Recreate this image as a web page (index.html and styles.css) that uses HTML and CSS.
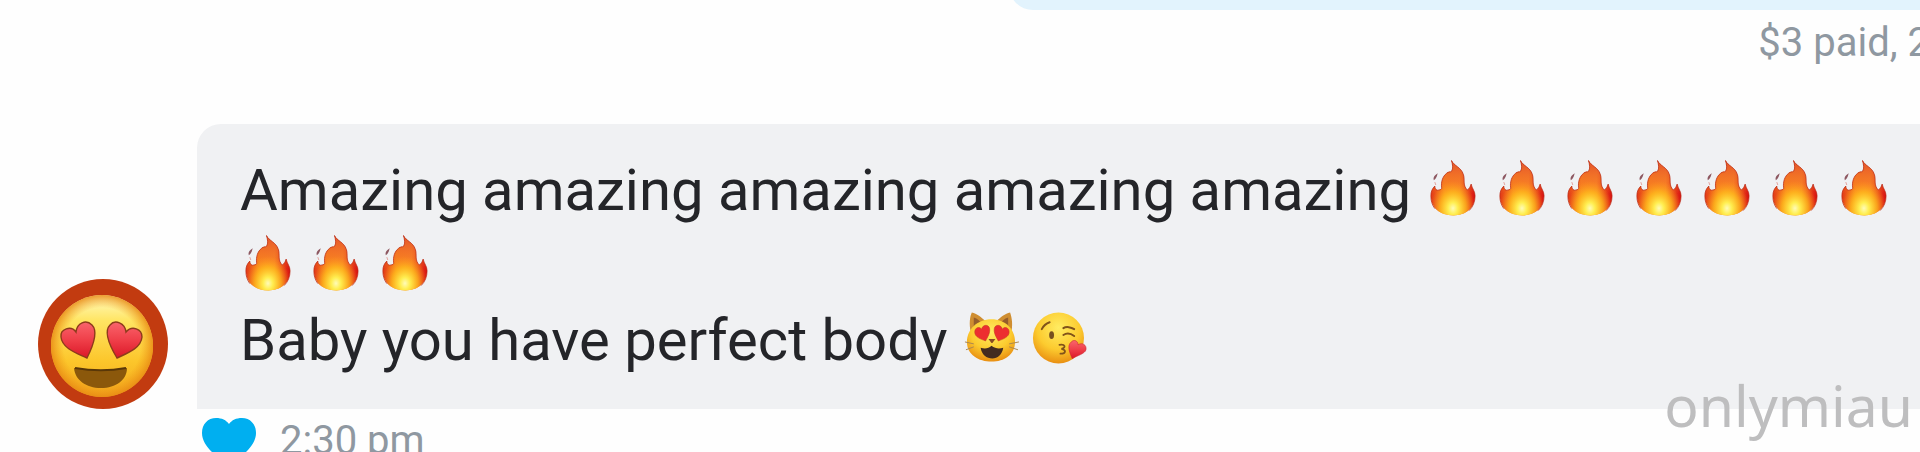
FILE: index.html
```html
<!DOCTYPE html>
<html lang="en">
<head>
  <meta charset="UTF-8">
  <meta name="viewport" content="width=device-width, initial-scale=1.0">
  <title>Messages</title>
  <link rel="stylesheet" href="styles.css">
</head>
<body>

  <!-- shared emoji shapes -->
  <svg class="sprites" width="0" height="0" aria-hidden="true">
    <defs>
      <linearGradient id="flame-side" x1="0" y1="0" x2="1" y2="0">
        <stop offset="0" stop-color="#e23a18"/>
        <stop offset="0.3" stop-color="#f9821d"/>
        <stop offset="0.65" stop-color="#f98224"/>
        <stop offset="1" stop-color="#d80f12"/>
      </linearGradient>
      <linearGradient id="flame-top" x1="0" y1="0" x2="0" y2="1">
        <stop offset="0" stop-color="#e2502b"/>
        <stop offset="0.6" stop-color="#f4782a" stop-opacity="0"/>
      </linearGradient>
      <radialGradient id="flame-glow" cx="0.5" cy="0.87" r="0.5">
        <stop offset="0" stop-color="#fffbb8"/>
        <stop offset="0.22" stop-color="#ffee50"/>
        <stop offset="0.6" stop-color="#ffc21c" stop-opacity="0.7"/>
        <stop offset="1" stop-color="#ff9a1c" stop-opacity="0"/>
      </radialGradient>
      <radialGradient id="face" cx="0.5" cy="0.3" r="0.7">
        <stop offset="0" stop-color="#ffec62"/>
        <stop offset="0.6" stop-color="#fccb2f"/>
        <stop offset="1" stop-color="#e98f12"/>
      </radialGradient>
      <linearGradient id="face-big" x1="0" y1="0" x2="0" y2="1">
        <stop offset="0" stop-color="#fffbc4"/>
        <stop offset="0.25" stop-color="#ffe563"/>
        <stop offset="0.65" stop-color="#fcc62b"/>
        <stop offset="1" stop-color="#f3a81c"/>
      </linearGradient>
      <radialGradient id="face-edge">
        <stop offset="0.75" stop-color="#f09a18" stop-opacity="0"/>
        <stop offset="1" stop-color="#e88a14" stop-opacity="0.85"/>
      </radialGradient>
      <linearGradient id="heart" x1="0" y1="0" x2="0" y2="1">
        <stop offset="0" stop-color="#f9646c"/>
        <stop offset="0.5" stop-color="#ef3f49"/>
        <stop offset="1" stop-color="#db1728"/>
      </linearGradient>
      <path id="flame-shape" d="M27 2C29 7 37 9 39 16C41 21 38 27 43 32C45 31 46 29 47 26C48 31 51 33 51 38C51 51 41 58 29 58C15 58 6 50 6 38C6 34 7 31 10 28C10 31 12 33 14 32C16 32 17 31 17 30C16 24 18 18 22 15C24 13 26 14 27 13C29 10 28 6 27 2Z"/>
      <symbol id="fire" viewBox="0 0 55 60">
        <use href="#flame-shape" fill="url(#flame-side)"/>
        <use href="#flame-shape" fill="url(#flame-top)"/>
        <use href="#flame-shape" fill="url(#flame-glow)"/>
        <path d="M27 2C29 7 37 9 39 16C41 21 38 27 43 32C45 31 46 29 47 26C48 31 51 33 51 38C51 44 49 49 45 53M10 51C7 47 6 43 6 38C6 34 7 31 10 28C10 31 12 33 14 32C16 32 17 31 17 30C16 24 18 18 22 15C24 13 26 14 27 13C29 10 28 6 27 2" fill="none" stroke="#b92c16" stroke-width="1" opacity="0.75"/>
        <path d="M13 15C12 18 12 20 9 22C8 19 10 17 13 15Z" fill="#8d5861"/>
        <path d="M10 24L11 27" stroke="#e3a29c" stroke-width="1"/>
      </symbol>
    </defs>
  </svg>

  <main class="chat">
    <div class="bubble-out"></div>
    <p class="meta meta-out">$3 paid, 2</p>

    <div class="message">
      <svg class="avatar" viewBox="0 0 130 130" role="img" aria-label="Smiling face with heart eyes">
        <circle cx="65" cy="65" r="65" fill="#c23b10"/>
        <circle cx="64" cy="67" r="51" fill="url(#face-big)"/>
        <circle cx="64" cy="67" r="51" fill="url(#face-edge)"/>
        <g fill="url(#heart)" stroke="#8d3b1b" stroke-width="1.4">
          <path d="M49 79C41 75 24 70 23 58C22 50 33 46 38 53C39 44 48 40 54 46C61 53 54 69 49 79Z"/>
          <path d="M79 79C87 75 103 70 104 58C104 50 94 46 88 53C87 44 77 40 72 46C65 53 73 69 79 79Z"/>
        </g>
        <path d="M36 89C54 92 72 92 89 89C89 101 78 109 63 109C48 109 37 101 36 89Z" fill="#8b580b"/>
        <path d="M37 89C54 92 72 92 88 89" fill="none" stroke="#593708" stroke-width="2"/>
      </svg>

      <div class="bubble">
        <p>Amazing amazing amazing amazing amazing
          <svg class="emoji" role="img" aria-label="fire"><use href="#fire"/></svg>
          <svg class="emoji" role="img" aria-label="fire"><use href="#fire"/></svg>
          <svg class="emoji" role="img" aria-label="fire"><use href="#fire"/></svg>
          <svg class="emoji" role="img" aria-label="fire"><use href="#fire"/></svg>
          <svg class="emoji" role="img" aria-label="fire"><use href="#fire"/></svg>
          <svg class="emoji" role="img" aria-label="fire"><use href="#fire"/></svg>
          <svg class="emoji" role="img" aria-label="fire"><use href="#fire"/></svg>
          <svg class="emoji" role="img" aria-label="fire"><use href="#fire"/></svg>
          <svg class="emoji" role="img" aria-label="fire"><use href="#fire"/></svg>
          <svg class="emoji" role="img" aria-label="fire"><use href="#fire"/></svg>
        </p>
        <p>Baby you have perfect body
          <svg class="emoji" viewBox="0 0 55 60" role="img" aria-label="cat with heart eyes">
            <path d="M9 24C7 16 8 8 10 4C15 5 20 9 24 13H35C39 9 44 5 49 4C51 10 52 17 50 25Z" fill="#cf8e31"/>
            <path d="M12 9C16 10 18 13 20 15L12 20ZM47 9C43 10 41 13 39 15L47 20Z" fill="#955e2b"/>
            <path d="M30 11C44 11 54 21 54 34C54 47 43 54 30 54C17 54 5 47 5 34C5 21 16 11 30 11Z" fill="url(#face)"/>
            <g fill="#ed2e30" stroke="#c43a20" stroke-width="0.6">
              <path d="M24 33C19 31 13 29 13 24C13 19 18 18 20 21C21 16 27 16 28 20C29 25 26 29 24 33Z"/>
              <path d="M37 33C42 31 48 29 48 24C48 19 43 18 41 21C40 16 34 16 33 20C32 25 35 29 37 33Z"/>
            </g>
            <path d="M27 31H34L31 35H30Z" fill="#884b23"/>
            <path d="M19 40C23 41 27 41 30 38C34 41 38 41 42 40C41 47 36 51 31 51C25 51 20 47 19 40Z" fill="#432b20"/>
            <path d="M12 36L3 34M12 39L4 42M48 36L58 34M48 39L57 42" stroke="#a98751" stroke-width="1" fill="none"/>
          </svg>
          <svg class="emoji" viewBox="0 0 55 60" role="img" aria-label="face blowing a kiss">
            <circle cx="29" cy="30" r="26" fill="url(#face)"/>
            <path d="M12 21C14 17 17 15 20 14M34 20C37 18 42 19 45 21M34 27C37 25 41 25 45 28" fill="none" stroke="#81531a" stroke-width="2" stroke-linecap="round"/>
            <ellipse cx="22" cy="27" rx="2.5" ry="4" fill="#76501f"/>
            <path d="M30 37C36 36 37 40 32 41C37 42 37 46 31 46" fill="none" stroke="#81531a" stroke-width="1.8" stroke-linecap="round"/>
            <path d="M43 51C41 46 37 38 42 34C45 31 49 33 49 37C53 34 58 37 57 42C56 46 48 48 43 51Z" fill="url(#heart)" stroke="#cc2430" stroke-width="0.6"/>
          </svg>
        </p>
      </div>
    </div>

    <div class="reaction">
      <svg class="like" viewBox="0 0 56 50" role="img" aria-label="Liked">
        <path d="M28 49C20 42 1 31 1 16C1 7 7 1 15 1C21 1 25 3 28 7C31 3 35 1 41 1C49 1 55 7 55 16C55 31 36 42 28 49Z" fill="#00aff0"/>
      </svg>
      <time class="meta" datetime="14:30">2:30 pm</time>
    </div>

    <span class="watermark">onlymiau</span>
  </main>

</body>
</html>
```

FILE: styles.css
```css
body {
  margin: 0;
  background-color: #fefefe;
  font-family: Roboto, sans-serif;
  color: #242529;
}

p {
  margin: 0;
}

.sprites {
  position: absolute;
}

.chat {
  position: relative;
  height: 100vh;
  overflow: hidden;
}

.bubble-out {
  height: 40px;
  margin-top: -30px;
  margin-left: 1009px;
  background-color: #e2f3fd;
  border-bottom-left-radius: 24px;
}

.meta {
  font-size: 40px;
  line-height: 48px;
  color: #8f98a1;
  white-space: nowrap;
}

.meta-out {
  margin-top: 9px;
  margin-right: -10px;
  text-align: right;
}

.message {
  display: flex;
  align-items: flex-end;
  gap: 29px;
  margin-top: 57px;
  padding-left: 38px;
}

.avatar {
  flex: none;
  width: 130px;
  height: 130px;
}

.bubble {
  flex: 1;
  padding: 29px 24px 31px 43px;
  background-color: #f0f1f3;
  border-top-left-radius: 24px;
  font-size: 58px;
  line-height: 75px;
}

.emoji {
  width: 54px;
  height: 60px;
  vertical-align: -8px;
  overflow: visible;
}

.reaction {
  display: flex;
  align-items: flex-start;
  gap: 23px;
  padding: 8px 0 0 201px;
}

.like {
  width: 56px;
  height: 50px;
}

.watermark {
  position: absolute;
  right: 7px;
  bottom: 15px;
  font-family: "Noto Sans", sans-serif;
  font-size: 57px;
  line-height: 64px;
  color: #bebebf;
}
```
